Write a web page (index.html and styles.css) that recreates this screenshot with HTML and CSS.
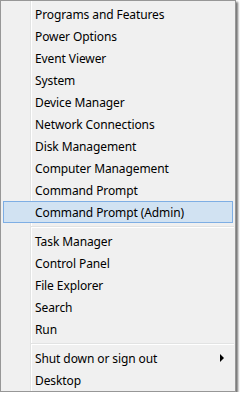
FILE: index.html
```html
<!DOCTYPE html>
<html>
<head>
<title>Quick Link Menu</title>
<meta charset="utf-8">
<link rel="stylesheet" href="styles.css">
</head>
<body>

<div class="menu">
    <div class="item">Programs and Features</div>
    <div class="item">Power Options</div>
    <div class="item">Event Viewer</div>
    <div class="item">System</div>
    <div class="item">Device Manager</div>
    <div class="item">Network Connections</div>
    <div class="item">Disk Management</div>
    <div class="item">Computer Management</div>
    <div class="item">Command Prompt</div>
    <div class="item hot">Command Prompt (Admin)</div>
    <div class="sep"></div>
    <div class="item">Task Manager</div>
    <div class="item">Control Panel</div>
    <div class="item">File Explorer</div>
    <div class="item">Search</div>
    <div class="item">Run</div>
    <div class="sep"></div>
    <div class="item sub">Shut down or sign out <span class="arrow"></span></div>
    <div class="item">Desktop</div>
</div>

</body>
</html>
```

FILE: styles.css
```css
body {
    margin: 0;
    background-color: #ffffff;
    font-family: "Noto Sans", "Open Sans", sans-serif;
}

.menu {
    width: 234px;
    padding: 2px 0 0 0;
    border: 1px solid #979797;
    background-color: #f0f0f0;
    /* gutter line next to the icon column */
    background-image: linear-gradient(to right, transparent 29px, #e2e3e3 29px, #e2e3e3 30px, #ffffff 30px, #ffffff 31px, transparent 31px);
    box-shadow: 2px 2px 2px rgba(0, 0, 0, 0.55);
}

.item {
    display: flex;
    align-items: center;
    height: 22px;
    margin: 0 2px;
    padding-left: 31px;
    font-size: 12px;
    letter-spacing: -0.1px;
    color: #000000;
    border: 1px solid transparent;
    box-sizing: border-box;
}

.item.hot {
    background-color: #d1e2f2;
    border-color: #7eaee4;
}

.item.sub {
    justify-content: space-between;
    padding-right: 8px;
}

.arrow {
    width: 0;
    height: 0;
    border-left: 4px solid #000000;
    border-top: 4px solid transparent;
    border-bottom: 4px solid transparent;
}

.sep {
    height: 1px;
    margin: 3px 1px 2px 30px;
    background-color: #e2e3e3;
    border-bottom: 1px solid #ffffff;
}
```
